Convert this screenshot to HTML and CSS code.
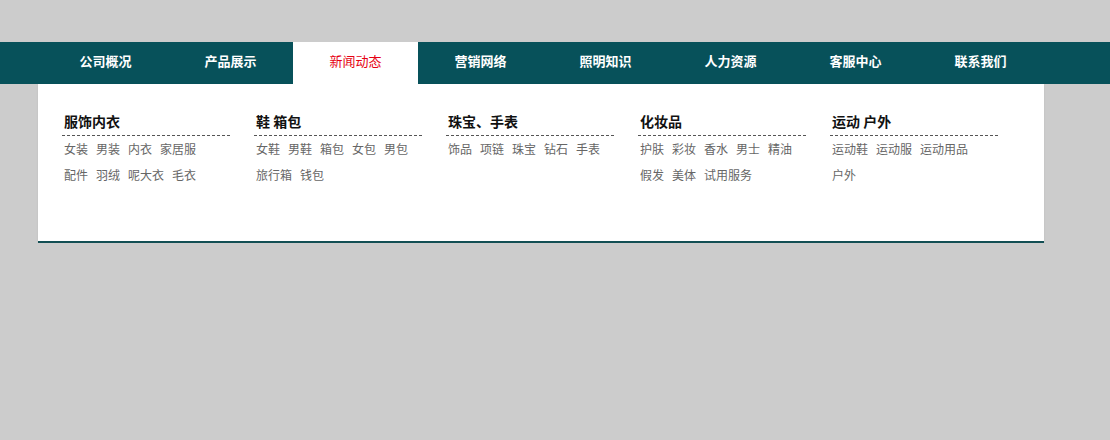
FILE: index.html
```html
<!DOCTYPE html>
<html lang="zh-CN">
<head>
<meta charset="utf-8">
<title>导航</title>
<link rel="stylesheet" href="styles.css">
</head>
<body>
<div class="nav">
  <ul class="nav-list">
    <li class="nav-item">公司概况</li>
    <li class="nav-item">产品展示</li>
    <li class="nav-item active">新闻动态</li>
    <li class="nav-item">营销网络</li>
    <li class="nav-item">照明知识</li>
    <li class="nav-item">人力资源</li>
    <li class="nav-item">客服中心</li>
    <li class="nav-item">联系我们</li>
  </ul>
</div>
<div class="dropdown">
  <div class="col">
    <h3 class="col-title">服饰内衣</h3>
    <div class="links"><a>女装</a><a>男装</a><a>内衣</a><a>家居服</a><a>配件</a><a>羽绒</a><a>呢大衣</a><a>毛衣</a></div>
  </div>
  <div class="col">
    <h3 class="col-title">鞋 箱包</h3>
    <div class="links"><a>女鞋</a><a>男鞋</a><a>箱包</a><a>女包</a><a>男包</a><a>旅行箱</a><a>钱包</a></div>
  </div>
  <div class="col">
    <h3 class="col-title">珠宝、手表</h3>
    <div class="links"><a>饰品</a><a>项链</a><a>珠宝</a><a>钻石</a><a>手表</a></div>
  </div>
  <div class="col">
    <h3 class="col-title">化妆品</h3>
    <div class="links"><a>护肤</a><a>彩妆</a><a>香水</a><a>男士</a><a>精油</a><a>假发</a><a>美体</a><a>试用服务</a></div>
  </div>
  <div class="col">
    <h3 class="col-title">运动 户外</h3>
    <div class="links"><a>运动鞋</a><a>运动服</a><a>运动用品</a><a>户外</a></div>
  </div>
</div>
</body>
</html>
```
FILE: styles.css
```css
html, body {
  margin: 0;
  padding: 0;
}
body {
  background: #cccccc;
  font-family: "Noto Sans CJK SC", "Microsoft YaHei", sans-serif;
  padding-top: 42px;
}
.nav {
  background: #07515a;
  height: 42px;
}
.nav-list {
  list-style: none;
  margin: 0 auto;
  padding: 0;
  width: 1024px;
  display: flex;
}
.nav-item {
  width: 125px;
  height: 42px;
  line-height: 37px;
  text-align: center;
  color: #ffffff;
  font-size: 13px;
  font-weight: bold;
}
.nav-item.active {
  background: #ffffff;
  color: #e60012;
  font-weight: normal;
}
.dropdown {
  margin-left: 38px;
  width: 982px;
  height: 157px;
  padding-left: 24px;
  background: #ffffff;
  border-bottom: 2px solid #134f54;
  display: flex;
  align-items: flex-start;
  box-shadow: 0 1px 2px rgba(0, 0, 0, 0.08);
}
.col {
  width: 168px;
  margin-right: 24px;
  margin-top: 25px;
}
.col-title {
  margin: 0;
  padding: 0 0 2px 2px;
  height: 24px;
  line-height: 24px;
  font-size: 14px;
  font-weight: bold;
  color: #111111;
  border-bottom: 1px dashed #555555;
}
.links {
  padding-left: 2px;
  font-size: 12px;
  line-height: 26px;
  color: #666666;
}
.links a {
  display: inline-block;
  margin-right: 8px;
  color: #666666;
}
```
